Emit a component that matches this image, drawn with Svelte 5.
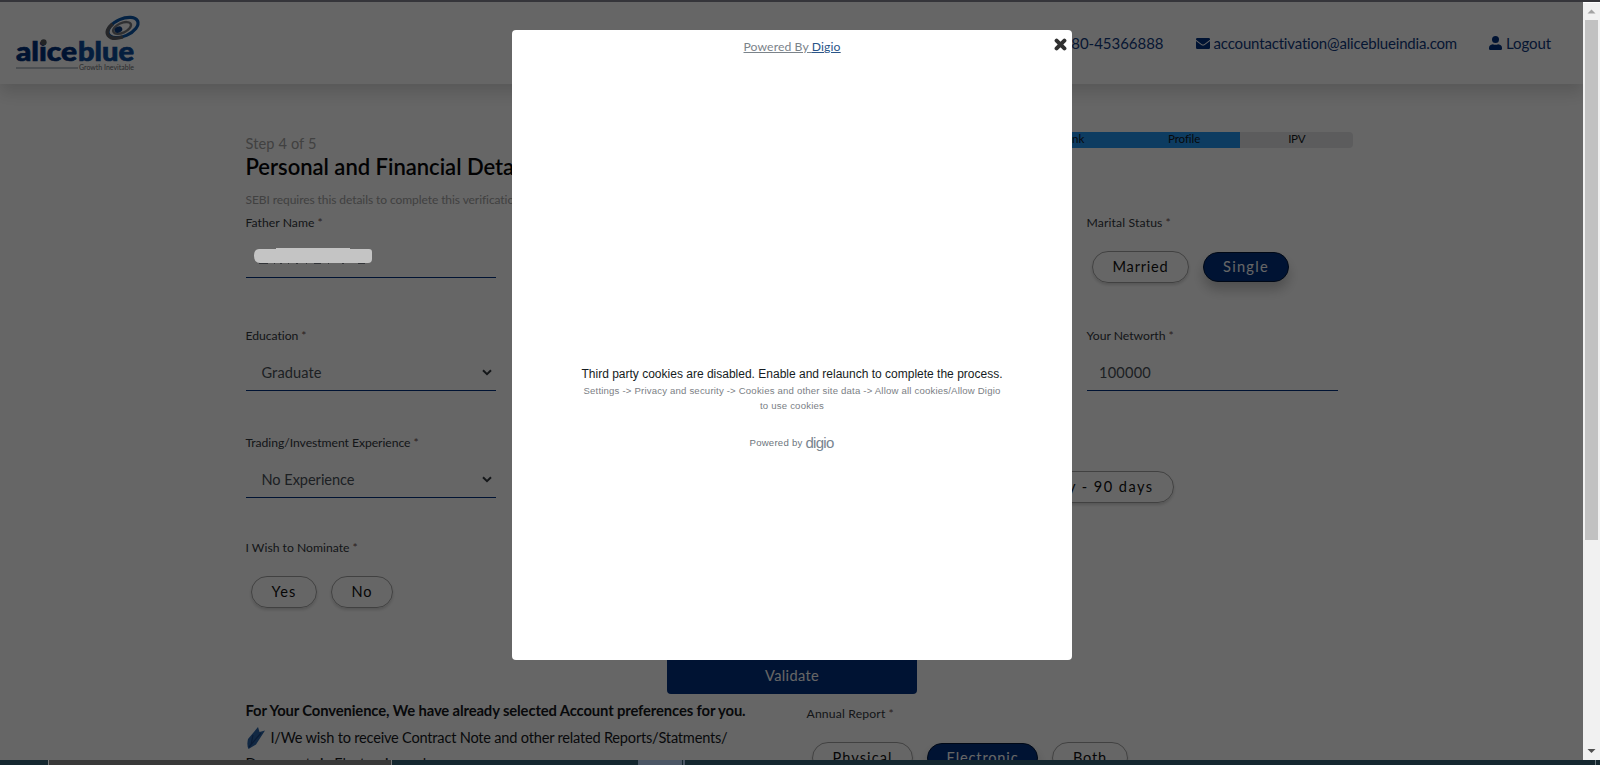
<script>
  // Tracks a line of text out (or in) so that it spans the given width.
  function fit(node, width) {
    if (!width) return;
    node.style.letterSpacing = '0px';
    const natural = node.getBoundingClientRect().width;
    const count = node.textContent.length;
    node.style.letterSpacing = `${((width - natural) / count).toFixed(3)}px`;
  }

  const steps = [
    { name: 'Email', w: 27, done: true },
    { name: 'PAN', w: 22, done: true },
    { name: 'Bank', w: 26, done: true },
    { name: 'Profile', w: 32, done: true },
    { name: 'IPV', w: 17, done: false }
  ];
</script>

{#snippet label(text, w)}
  <div class="label"><span use:fit={w}>{text}</span> <i>*</i></div>
{/snippet}

{#snippet pill(text, w, box, on)}
  <button class="pill" class:on style="width:{box}px"><span use:fit={w}>{text}</span></button>
{/snippet}

{#snippet select(text, w)}
  <div class="control select">
    <span use:fit={w}>{text}</span>
    <svg width="10" height="7" viewBox="0 0 10 7"><path d="M1 1.2 5 5.2 9 1.2" fill="none" stroke="#343a40" stroke-width="2" /></svg>
  </div>
{/snippet}

<div class="screen">
  <div class="strip"></div>
  <div class="view">
    <div class="page">
      <header>
        <svg class="logo" width="126" height="58" viewBox="0 0 126 58">
          <g transform="rotate(-24 107 12.5)" fill="none">
            <ellipse cx="107" cy="12.5" rx="16" ry="8.6" stroke="#0b56a8" stroke-width="3.2" />
            <path d="M103 21A16 8.6 0 0 1 99 4.9" stroke="#5d6066" stroke-width="3.6" />
            <ellipse cx="106" cy="12.5" rx="9.5" ry="4.8" stroke="#77797e" stroke-width="2.4" />
            <ellipse cx="102" cy="12.5" rx="4" ry="3" fill="#083b80" />
          </g>
          <text x="0" y="45.5" font-size="27" textLength="61" lengthAdjust="spacingAndGlyphs" fill="#00307c" stroke="#00307c" stroke-width=".7">alice</text>
          <text x="62" y="45.5" font-size="27" textLength="56" lengthAdjust="spacingAndGlyphs" fill="#0a4b9c" stroke="#0a4b9c" stroke-width=".7">blue</text>
          <circle cx="27.6" cy="27.2" r="3" fill="#55585e" />
          <path d="M0 53H62" stroke="#7f8d9c" stroke-width="1" />
          <text class="tag" x="63" y="55" font-size="6.6" textLength="55" lengthAdjust="spacingAndGlyphs" fill="#6b6f75">Growth Inevitable</text>
        </svg>
        <nav>
          <a href="#tel"><span use:fit={101}>080-45366888</span></a>
          <a href="#mail">
            <svg width="14" height="11" viewBox="0 0 14 11"><path d="M1.3 0H12.7Q14 0 14 1.3V1.8L8.2 6.2Q7 7 5.8 6.2L0 1.8V1.3Q0 0 1.3 0ZM0 3 5.3 7Q7 8.2 8.7 7L14 3V9.7Q14 11 12.7 11H1.3Q0 11 0 9.7Z" fill="#003080" /></svg>
            <span use:fit={244}>accountactivation@aliceblueindia.com</span>
          </a>
          <a href="#out">
            <svg width="13" height="14" viewBox="0 0 13 14"><circle cx="6.5" cy="3.5" r="3.5" fill="#003080" /><path d="M3.8 8.2Q6.5 9.4 9.2 8.2Q13 8.6 13 12V12.7Q13 14 11.7 14H1.3Q0 14 0 12.7V12Q0 8.6 3.8 8.2Z" fill="#003080" /></svg>
            <span use:fit={45}>Logout</span>
          </a>
        </nav>
      </header>

      <main>
        <div class="intro">
          <div class="titles">
            <div class="step"><span use:fit={71}>Step 4 of 5</span></div>
            <h1><span use:fit={289}>Personal and Financial Details</span></h1>
            <p><span use:fit={278}>SEBI requires this details to complete this verification.</span></p>
          </div>
          <div class="progress">
            {#each steps as s}
              <div class:done={s.done}><span use:fit={s.w}>{s.name}</span></div>
            {/each}
          </div>
        </div>

        <div class="row r1">
          <div class="col">
            {@render label('Father Name', 69)}
            <div class="control"></div>
          </div>
          <div class="col last">
            {@render label('Marital Status', 76)}
            <div class="pills">
              {@render pill('Married', 56, 97, false)}
              {@render pill('Single', 46, 86, true)}
            </div>
          </div>
        </div>

        <div class="row r2">
          <div class="col">
            {@render label('Education', 53)}
            {@render select('Graduate', 60)}
          </div>
          <div class="col last">
            {@render label('Your Networth', 79)}
            <div class="control value"><span use:fit={52}>100000</span></div>
          </div>
        </div>

        <div class="row r3">
          <div class="col">
            {@render label('Trading/Investment Experience', 165)}
            {@render select('No Experience', 93)}
          </div>
          <div class="settle">
            {@render pill('Quarterly - 90 days', 151, 192, false)}
          </div>
        </div>

        <div class="row r4">
          <div class="col">
            {@render label('I Wish to Nominate', 104)}
            <div class="pills">
              {@render pill('Yes', 25, 66, false)}
              {@render pill('No', 21, 62, false)}
            </div>
          </div>
        </div>

        <button class="validate"><span use:fit={54}>Validate</span></button>

        <div class="prefs">
          <div class="terms">
            <b><span use:fit={500}>For Your Convenience, We have already selected Account preferences for you.</span></b>
            <div class="term">
              <svg width="18" height="22" viewBox="0 0 18 22"><path d="M1 12 11 0 12.5 5 18 3.5 9 17.5 1.5 22Q-.5 18 1 12Z" fill="#2c64a8" /><path d="M2 20 14 6M6 8 4 18" stroke="#184584" stroke-width="1.2" /></svg>
              <span use:fit={457}>I/We wish to receive Contract Note and other related Reports/Statments/</span>
            </div>
            <div class="more"><span use:fit={191}>Documents in Electronic mode.</span></div>
          </div>
          <div class="report">
            {@render label('Annual Report', 79)}
            <div class="pills">
              {@render pill('Physical', 60, 101, false)}
              {@render pill('Electronic', 72, 111, true)}
              {@render pill('Both', 34, 76, false)}
            </div>
          </div>
        </div>
      </main>

      <div class="overlay"></div>
      <svg class="redacted" width="120" height="18" viewBox="0 0 120 18">
        <path d="M5 15.3h9M20 15.3h1M26 15.3h2M34 15.3h1M42 15.3h2M52 15.3h1M60 15.3h7M74 15.3h1M88 15.3h2M104 15.3h7" stroke="#26292d" />
        <path d="M5 1H22V0H96V1H115Q118 1 118 4V11Q118 15 114 15H6Q0 15 0 8Q0 1 5 1Z" fill="#c4c4c4" />
      </svg>

      <section class="modal">
        <div class="brand"><span use:fit={97}>Powered By <em>Digio</em></span></div>
        <svg class="close" width="13" height="13" viewBox="0 0 13 13"><path d="M2.6 2.6 10.4 10.4M10.4 2.6 2.6 10.4" stroke="#303030" stroke-width="4" stroke-linecap="round" /></svg>
        <div class="message">
          <div class="main"><span use:fit={421}>Third party cookies are disabled. Enable and relaunch to complete the process.</span></div>
          <div class="hint"><span use:fit={417}>Settings -&gt; Privacy and security -&gt; Cookies and other site data -&gt; Allow all cookies/Allow Digio</span></div>
          <div class="hint"><span use:fit={64}>to use cookies</span></div>
          <div class="by"><span use:fit={53}>Powered by</span><strong><span use:fit={28}>digio</span></strong></div>
        </div>
      </section>
    </div>
    <div class="scrollbar">
      <svg width="17" height="17" viewBox="0 0 17 17"><path d="M4.5 10.5 8.5 6.5 12.5 10.5Z" fill="#a3a3a3" /></svg>
      <div class="thumb"></div>
      <svg class="down" width="17" height="17" viewBox="0 0 17 17"><path d="M4.5 6 8.5 10 12.5 6Z" fill="#505050" /></svg>
    </div>
  </div>
  <div class="taskbar"><div class="search"></div><div class="active"></div><div class="tick"></div><div class="end"></div></div>
</div>

<style>
  .screen { width: 1600px; height: 765px; display: flex; flex-direction: column; overflow: hidden; background: #fff; font: 300 14.6px/20px Lato, "Open Sans", sans-serif; color: #212529; }
  .screen * { box-sizing: border-box; }
  span { white-space: pre; display: inline-block; }
  .strip { height: 2px; background: #35353a; flex: none; }
  .view { height: 758px; display: flex; flex: none; }
  .page { width: 1583px; height: 758px; position: relative; overflow: hidden; background: #fff; }

  header { height: 82px; padding: 0 32px 0 16px; display: flex; justify-content: space-between; box-shadow: 0 8px 16px rgba(0, 0, 0, .15); }
  .logo { margin-top: 13px; overflow: visible; }
  .logo text { font-family: Lato, sans-serif; font-weight: 900; }
  .logo .tag { font-weight: 400; }
  nav { display: flex; align-items: center; gap: 32px; }
  nav a { display: flex; align-items: center; gap: 4px; color: #103a80; text-decoration: none; font-size: 15px; font-weight: 400; }

  main { padding-left: 245.5px; }
  .intro { display: flex; height: 129px; }
  .titles { width: 544.5px; padding-top: 49px; }
  .step { height: 20px; line-height: 21px; color: #a2a2a2; font-weight: 400; }
  h1 { margin: 2px 0 0; font-size: 22px; line-height: 24px; font-weight: 600; color: #050608; }
  p { margin: 12px 0 0; font-size: 12px; line-height: 18px; color: #a2a2a2; font-weight: 400; }
  .progress { margin-top: 48px; width: 563px; height: 16px; display: flex; background: #e6e7e8; border-radius: 4px; overflow: hidden; }
  .progress div { flex: 1; text-align: center; font-size: 11.6px; line-height: 14px; color: #15181c; font-weight: 400; }
  .progress .done { background: #2196f3; }

  .row { display: flex; }
  .r1 { height: 113px; }
  .r2 { height: 107px; }
  .r3 { height: 105px; }
  .r4 { height: 111px; }
  .col { width: 250px; }
  .last { margin-left: 591px; width: 251px; }
  .label { height: 20px; font-size: 12.2px; line-height: 19px; display: flex; gap: 3px; font-weight: 400; color: #33383e; }
  .label i { font-style: normal; color: #6d5050; }
  .control { height: 45px; border-bottom: 1px solid #003080; }
  .select, .value { display: flex; align-items: center; justify-content: space-between; padding: 8px 4px 0 16px; color: #495057; font-weight: 400; }
  .select span, .value span { line-height: 21px; }
  .value { padding-left: 12.5px; }
  .pills { display: flex; align-items: center; gap: 14px; padding: 18px 0 0 5.5px; }
  .pill { height: 32px; padding: 0; border: 1px solid #a4a4a4; border-radius: 16px; background: transparent; font: 400 14.6px/18px Lato, sans-serif; color: #111; flex: none; box-shadow: 0 2px 3px rgba(0, 0, 0, .16); text-align: center; }
  .pill.on { height: 30px; background: #003080; border-color: #001638; color: #fff; box-shadow: 0 8px 12px rgba(0, 0, 0, .22); }
  .settle { padding: 38px 0 0 486.5px; }

  .validate { display: block; margin: -1px 0 0 421.5px; width: 250px; height: 46px; padding: 10px 0 0; border: 0; border-radius: 4px; background: #003080; color: #fff; font: 400 14.6px/20px Lato, sans-serif; }
  .prefs { display: flex; }
  .terms { width: 561px; padding-top: 5px; color: #15181c; }
  b { display: block; font-size: 14.8px; line-height: 22px; font-weight: 700; }
  .term { display: flex; align-items: center; gap: 6px; height: 24px; margin: 5px 0 0 1px; font-weight: 400; }
  .term span { line-height: 22px; }
  .more { height: 24px; line-height: 24px; font-weight: 400; margin-top: 2px; }
  .report { padding-top: 10px; }

  .overlay { position: absolute; inset: 0; background: rgba(0, 0, 0, .6); }
  .redacted { position: absolute; left: 254px; top: 246px; }
  .modal { position: absolute; left: 512px; top: 28px; width: 560px; height: 630px; background: #fff; border-radius: 4px; text-align: center; }
  .brand { padding-top: 7px; font-size: 12.2px; line-height: 20px; color: #7b838a; font-weight: 400; }
  .brand span, .brand em { text-decoration: underline; font-style: normal; }
  .brand em { color: #2a5588; }
  .close { position: absolute; right: 5.5px; top: 8px; }
  .message { font-family: "Liberation Sans", Arial, sans-serif; font-weight: 400; padding-top: 308px; }
  .main { font-size: 12px; line-height: 18px; color: #151c22; }
  .hint { font-size: 9.6px; line-height: 15px; color: #7b8085; }
  .by { display: flex; justify-content: center; align-items: center; gap: 3px; margin: 20px 1px 0 0; height: 20px; font-size: 9.6px; color: #6c757d; }
  strong { font-size: 15px; font-weight: 400; color: #788590; }

  .scrollbar { width: 17px; height: 757px; margin-top: 1px; background: #f1f1f1; display: flex; flex-direction: column; align-items: center; }
  .scrollbar svg { flex: none; }
  .thumb { width: 13px; height: 520px; background: #c1c1c1; }
  .down { margin-top: auto; }
  .taskbar { height: 5px; display: flex; background: #14272f; flex: none; }
  .search { margin-left: 48px; width: 344px; background: #393939; border: solid #777; border-width: 0 1px; }
  .active { margin-left: 246px; width: 44px; background: #4b5665; }
  .tick { margin-left: 1px; width: 2px; background: #4b5665; }
  .end { margin-left: auto; margin-right: 4px; width: 1px; background: #68757c; }
</style>
